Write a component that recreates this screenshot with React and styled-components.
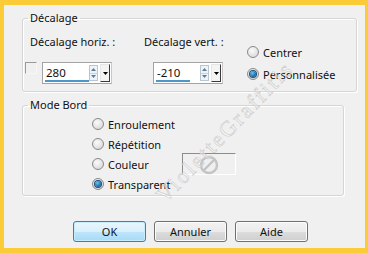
import styled, { createGlobalStyle } from 'styled-components';

const Global = createGlobalStyle`
  html, body { margin: 0; padding: 0; }
  body {
    background: #fbcb38;
    font-family: "Noto Sans", "Liberation Sans", sans-serif;
    font-size: 11px;
    color: #111;
  }
`;

// Cadre jaune autour de la boîte de dialogue
const Frame = styled.div`
  width: 368px;
  height: 253px;
  box-sizing: border-box;
  padding: 5px 3px 5px 4px;
`;

const Dialog = styled.div`
  position: relative;
  width: 361px;
  height: 243px;
  background: #f0f0f0;
  overflow: hidden;
  box-sizing: border-box;
  padding-left: 18px;
`;

const Group = styled.fieldset`
  margin: 0;
  padding: 0;
  width: ${p => p.$width}px;
  box-sizing: border-box;
  border: 1px solid #d5d5d5;
  border-radius: 3px;
  box-shadow: inset 1px 1px 0 #fff, 1px 1px 0 #fff;
  margin-top: ${p => p.$top}px;
`;

const Legend = styled.legend`
  margin-left: 5px;
  padding: 0 2px;
  line-height: 16px;
  height: 16px;
`;

const OffsetRow = styled.div`
  display: flex;
  align-items: flex-start;
  padding: 8px 0 7px 2px;
`;

const Column = styled.div`
  display: flex;
  flex-direction: column;
  width: ${p => p.$width}px;
  margin-left: ${p => p.$left || 0}px;
`;

const Label = styled.div`
  line-height: 16px;
  height: 16px;
  margin-left: ${p => p.$indent || 0}px;
  margin-bottom: 12px;
  white-space: nowrap;
`;

const FieldLine = styled.div`
  display: flex;
  align-items: flex-start;
  gap: 5px;
  margin-left: ${p => p.$indent || 0}px;
`;

const Check = styled.span`
  width: 10px;
  height: 10px;
  border-top: 1px solid #9a9a9a;
  border-left: 1px solid #9a9a9a;
  border-right: 1px solid #f7f7f7;
  border-bottom: 1px solid #f7f7f7;
`;

const NumBox = styled.div`
  display: flex;
  align-items: center;
  width: 70px;
  height: 22px;
  box-sizing: border-box;
  border: 1px solid #a3a3a3;
  border-right-color: #c8c8c8;
  background: #fff;
`;

const Value = styled.div`
  position: relative;
  flex: 1;
  height: 100%;
  padding-left: 3px;
  line-height: 19px;
  font-size: 11.5px;
`;

const Underline = styled.span`
  position: absolute;
  left: 2px;
  bottom: 1px;
  height: 2px;
  background: #4d96c9;
`;

const Spin = styled.div`
  display: flex;
  flex-direction: column;
  width: 9px;
  height: 16px;
  box-sizing: border-box;
  border: 1px solid #b9c6d2;
  background: #eef3f8;
  margin-right: 2px;
`;

const SpinHalf = styled.div`
  flex: 1;
  display: flex;
  align-items: center;
  justify-content: center;
  border-top: ${p => (p.$down ? '1px solid #c9d4de' : 'none')};
`;

const Drop = styled.div`
  display: flex;
  align-items: center;
  justify-content: center;
  width: 10px;
  height: 18px;
  box-sizing: border-box;
  background: #f4f4f4;
  border: 1px solid #e6e6e6;
  border-right: 1px solid #3a3a3a;
  border-bottom: 1px solid #3a3a3a;
  margin-right: 1px;
`;

const RadioList = styled.div`
  display: flex;
  flex-direction: column;
  gap: 6px;
  margin-left: 23px;
  margin-top: 10px;
`;

const RadioRow = styled.label`
  grid-column: 1;
  display: flex;
  align-items: center;
  gap: 4px;
  height: ${p => p.$h || 16}px;
  white-space: nowrap;
`;

const RadioDot = styled.span`
  display: flex;
  align-items: center;
  justify-content: center;
  width: 12px;
  height: 12px;
  box-sizing: border-box;
  border-radius: 50%;
  border: 1px solid #8a8a8a;
  background: radial-gradient(circle at 40% 35%, #fafafa 0%, #e2e2e2 60%, #cfcfcf 100%);

  &::after {
    content: '';
    display: ${p => (p.$on ? 'block' : 'none')};
    width: 6px;
    height: 6px;
    border-radius: 50%;
    background: radial-gradient(circle at 40% 35%, #6fc6f2 0%, #1f78b6 55%, #0c3f66 100%);
    box-shadow: 0 0 0 1px #1d4f78;
  }
`;

const ModeGrid = styled.div`
  display: grid;
  grid-template-columns: 90px 54px;
  grid-template-rows: repeat(4, 20px);
  padding: 1px 0 1px 69px;
`;

const Swatch = styled.div`
  grid-column: 2;
  grid-row: 3;
  align-self: center;
  display: flex;
  align-items: center;
  justify-content: center;
  height: 22px;
  box-sizing: border-box;
  border-top: 1px solid #8c8c8c;
  border-left: 1px solid #8c8c8c;
  border-right: 1px solid #fff;
  border-bottom: 1px solid #fff;
`;

const Buttons = styled.div`
  display: flex;
  gap: 8px;
  margin-top: 25px;
  padding-left: 51px;
`;

const Button = styled.button`
  width: 73px;
  height: 21px;
  padding: 0;
  font: inherit;
  color: #111;
  border-radius: 3px;
  border: 1px solid ${p => (p.$primary ? '#3c7fb1' : '#707070')};
  background: ${p =>
    p.$primary
      ? 'linear-gradient(#eaf6fd 0%, #d9f0fc 50%, #bee6fd 51%, #a7d9f5 100%)'
      : 'linear-gradient(#f2f2f2 0%, #ebebeb 50%, #dddddd 51%, #cfcfcf 100%)'};
  box-shadow: inset 0 0 0 1px ${p => (p.$primary ? '#c9ecfd' : '#fcfcfc')};
`;

const Watermark = styled.div`
  position: absolute;
  left: 221px;
  top: 127px;
  transform: translate(-50%, -50%) rotate(-46deg);
  font-family: "Liberation Serif", serif;
  font-size: 22px;
  letter-spacing: 2.5px;
  white-space: nowrap;
  color: rgba(255, 255, 255, 0.35);
  -webkit-text-stroke: 0.6px #cdcdcd;
  pointer-events: none;
`;

const Up = () => (
  <svg width="5" height="3" viewBox="0 0 5 3"><path d="M0 3 L2.5 0 L5 3 Z" fill="#5b7d9a" /></svg>
);
const Down = () => (
  <svg width="5" height="3" viewBox="0 0 5 3"><path d="M0 0 L2.5 3 L5 0 Z" fill="#5b7d9a" /></svg>
);
const Arrow = () => (
  <svg width="5" height="3" viewBox="0 0 5 3"><path d="M0 0 L2.5 3 L5 0 Z" fill="#000" /></svg>
);

function NumberField({ value, bar }) {
  return (
    <NumBox>
      <Value>
        {value}
        <Underline style={{ width: bar }} />
      </Value>
      <Spin>
        <SpinHalf><Up /></SpinHalf>
        <SpinHalf $down><Down /></SpinHalf>
      </Spin>
      <Drop><Arrow /></Drop>
    </NumBox>
  );
}

function Radio({ on, children, h }) {
  return (
    <RadioRow $h={h}>
      <RadioDot $on={on} />
      {children}
    </RadioRow>
  );
}

export default function App() {
  return (
    <>
      <Global />
      <Frame>
        <Dialog>
          <Group $width={335} $top={5}>
            <Legend>Décalage</Legend>
            <OffsetRow>
              <Column $width={88}>
                <Label $indent={5}>Décalage horiz. :</Label>
                <FieldLine>
                  <Check />
                  <NumberField value="280" bar={44} />
                </FieldLine>
              </Column>
              <Column $width={80} $left={31}>
                <Label>Décalage vert. :</Label>
                <FieldLine $indent={9}>
                  <NumberField value="-210" bar={34} />
                </FieldLine>
              </Column>
              <RadioList>
                <Radio>Centrer</Radio>
                <Radio on>Personnalisée</Radio>
              </RadioList>
            </OffsetRow>
          </Group>

          <Group $width={322} $top={5}>
            <Legend>Mode Bord</Legend>
            <ModeGrid>
              <Radio h={20}>Enroulement</Radio>
              <Radio h={20}>Répétition</Radio>
              <Radio h={20}>Couleur</Radio>
              <Swatch>
                <svg width="22" height="22" viewBox="0 0 22 22">
                  <circle cx="11" cy="12" r="8" fill="none" stroke="#c4c4c4" strokeWidth="2.4" />
                  <path d="M6 17 L16 7" stroke="#c4c4c4" strokeWidth="2.4" />
                </svg>
              </Swatch>
              <Radio h={20} on>Transparent</Radio>
            </ModeGrid>
          </Group>

          <Buttons>
            <Button $primary>OK</Button>
            <Button>Annuler</Button>
            <Button>Aide</Button>
          </Buttons>

          <Watermark>VioletteGraffitis</Watermark>
        </Dialog>
      </Frame>
    </>
  );
}
